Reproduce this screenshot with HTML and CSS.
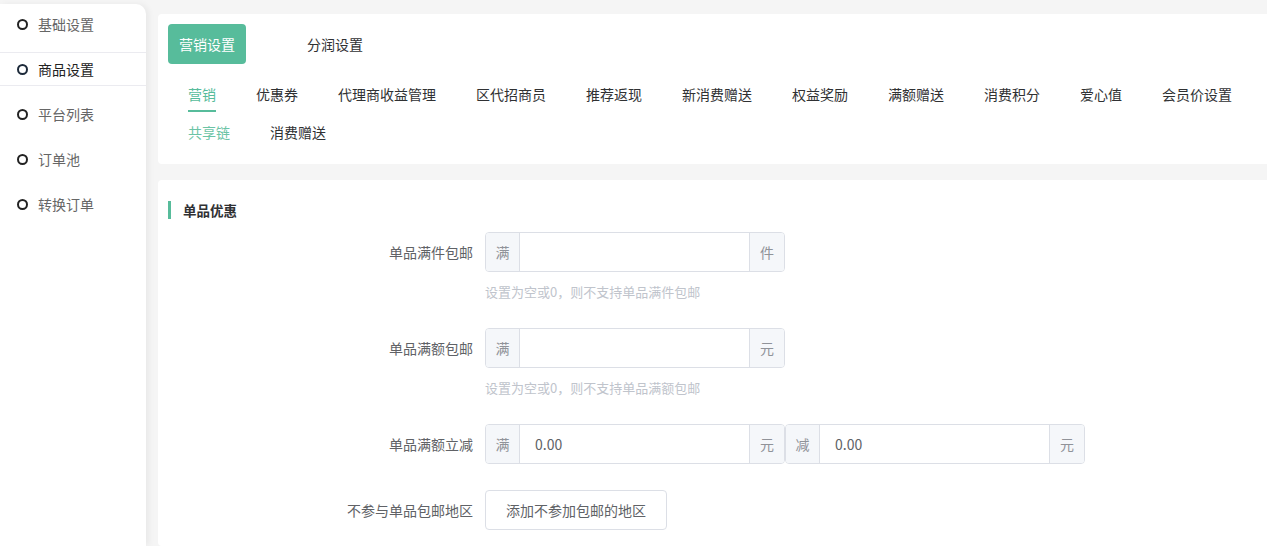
FILE: index.html
```html
<!DOCTYPE html>
<html lang="zh-CN">
<head>
    <meta charset="UTF-8">
    <meta name="viewport" content="width=device-width, initial-scale=1.0">
    <title>营销设置</title>
    <link rel="stylesheet" href="styles.css">
</head>
<body>
    <div class="page">
        <div class="sidebar">
            <ul>
                <li><i class="dot"></i>基础设置</li>
                <li class="active"><i class="dot"></i>商品设置</li>
                <li><i class="dot"></i>平台列表</li>
                <li><i class="dot"></i>订单池</li>
                <li><i class="dot"></i>转换订单</li>
            </ul>
        </div>
        <div class="main">
            <div class="card head">
                <div class="btns">
                    <div class="btn primary">营销设置</div>
                    <div class="btn plain">分润设置</div>
                </div>
                <ul class="tabs">
                    <li class="on">营销</li>
                    <li>优惠券</li>
                    <li>代理商收益管理</li>
                    <li>区代招商员</li>
                    <li>推荐返现</li>
                    <li>新消费赠送</li>
                    <li>权益奖励</li>
                    <li>满额赠送</li>
                    <li>消费积分</li>
                    <li>爱心值</li>
                    <li>会员价设置</li>
                    <li class="green">共享链</li>
                    <li>消费赠送</li>
                </ul>
            </div>
            <div class="card body">
                <div class="title">单品优惠</div>
                <div class="form-item">
                    <label>单品满件包邮</label>
                    <div class="field">
                        <div class="group">
                            <span class="pre">满</span>
                            <input type="text">
                            <span class="app">件</span>
                        </div>
                        <div class="hint">设置为空或0，则不支持单品满件包邮</div>
                    </div>
                </div>
                <div class="form-item">
                    <label>单品满额包邮</label>
                    <div class="field">
                        <div class="group">
                            <span class="pre">满</span>
                            <input type="text">
                            <span class="app">元</span>
                        </div>
                        <div class="hint">设置为空或0，则不支持单品满额包邮</div>
                    </div>
                </div>
                <div class="form-item">
                    <label>单品满额立减</label>
                    <div class="field row">
                        <div class="group">
                            <span class="pre">满</span>
                            <input type="text" value="0.00">
                            <span class="app">元</span>
                        </div>
                        <div class="group">
                            <span class="pre">减</span>
                            <input type="text" value="0.00">
                            <span class="app">元</span>
                        </div>
                    </div>
                </div>
                <div class="form-item">
                    <label>不参与单品包邮地区</label>
                    <div class="field">
                        <div class="btn-line">添加不参加包邮的地区</div>
                    </div>
                </div>
            </div>
        </div>
    </div>
</body>
</html>
```

FILE: styles.css
```css
* {
    box-sizing: border-box;
    margin: 0;
    padding: 0;
}
html,
body {
    height: 100%;
    overflow: hidden;
}
body {
    background-color: #f5f5f5;
    font-family: "Microsoft YaHei", "Noto Sans CJK SC", "Liberation Sans", sans-serif;
    font-size: 14px;
    color: #303133;
}
ul {
    list-style: none;
}
.page {
    display: flex;
    height: 100%;
}
.sidebar {
    width: 146px;
    margin-top: 4px;
    padding-top: 3px;
    background-color: #fff;
    border-top-right-radius: 10px;
    box-shadow: 3px 0 6px rgba(0, 0, 0, .05);
}
.sidebar li {
    display: flex;
    align-items: center;
    height: 34px;
    margin-bottom: 11px;
    padding-left: 17px;
    color: #666;
    border-top: 1px solid transparent;
    border-bottom: 1px solid transparent;
}
.sidebar li.active {
    color: #222;
    border-color: #ebebf0;
}
.sidebar .dot {
    width: 11px;
    height: 11px;
    margin-right: 10px;
    border: 2px solid #222;
    border-radius: 50%;
}
.sidebar li.active .dot {
    border-color: #1d2a3a;
}
.main {
    flex: 1;
    display: flex;
    flex-direction: column;
    padding: 14px 0 0 12px;
    overflow: hidden;
}
.card {
    background-color: #fff;
    border-radius: 4px 0 0 4px;
}
.head {
    padding: 10px 10px 14px;
}
.btns {
    display: flex;
    align-items: center;
}
.btn {
    height: 40px;
    line-height: 40px;
    padding: 0 11px;
    border-radius: 4px;
}
.btn.primary {
    background-color: #57bc9b;
    color: #fff;
}
.btn.plain {
    margin-left: 50px;
    color: #303133;
}
.tabs {
    display: flex;
    flex-wrap: wrap;
    column-gap: 40px;
    row-gap: 10px;
    margin-top: 20px;
    padding-left: 20px;
}
.tabs li {
    line-height: 20px;
    padding-bottom: 6px;
    border-bottom: 2px solid transparent;
    color: #303133;
}
.tabs li.on {
    color: #57bc9b;
    border-bottom-color: #57bc9b;
}
.tabs li.green {
    color: #6cc4a6;
}
.body {
    flex: 1;
    min-height: 0;
    margin-top: 16px;
    padding: 21px 10px 0;
}
.title {
    line-height: 18px;
    padding-left: 12px;
    border-left: 3px solid #57bc9b;
    font-weight: bold;
    font-size: 13.5px;
    color: #303133;
    margin-bottom: 13px;
}
.form-item {
    display: flex;
    margin-bottom: 26px;
}
.form-item label {
    width: 317px;
    padding-right: 12px;
    line-height: 40px;
    text-align: right;
    color: #606266;
}
.field.row {
    display: flex;
}
.group {
    display: flex;
    width: 300px;
    height: 40px;
    border: 1px solid #dcdfe6;
    border-radius: 4px;
    overflow: hidden;
}
.group .pre,
.group .app {
    display: flex;
    align-items: center;
    justify-content: center;
    background-color: #f5f7fa;
    color: #909399;
}
.group .pre {
    width: 34px;
    border-right: 1px solid #dcdfe6;
}
.group .app {
    width: 35px;
    border-left: 1px solid #dcdfe6;
}
.group input {
    flex: 1;
    min-width: 0;
    border: 0;
    outline: none;
    padding: 0 15px;
    font-family: inherit;
    font-size: 14px;
    color: #606266;
}
.hint {
    margin-top: 10px;
    line-height: 20px;
    font-size: 13px;
    color: #c0c4cc;
}
.btn-line {
    display: inline-block;
    height: 40px;
    line-height: 38px;
    padding: 0 20px;
    border: 1px solid #dcdfe6;
    border-radius: 4px;
    color: #606266;
}
```
